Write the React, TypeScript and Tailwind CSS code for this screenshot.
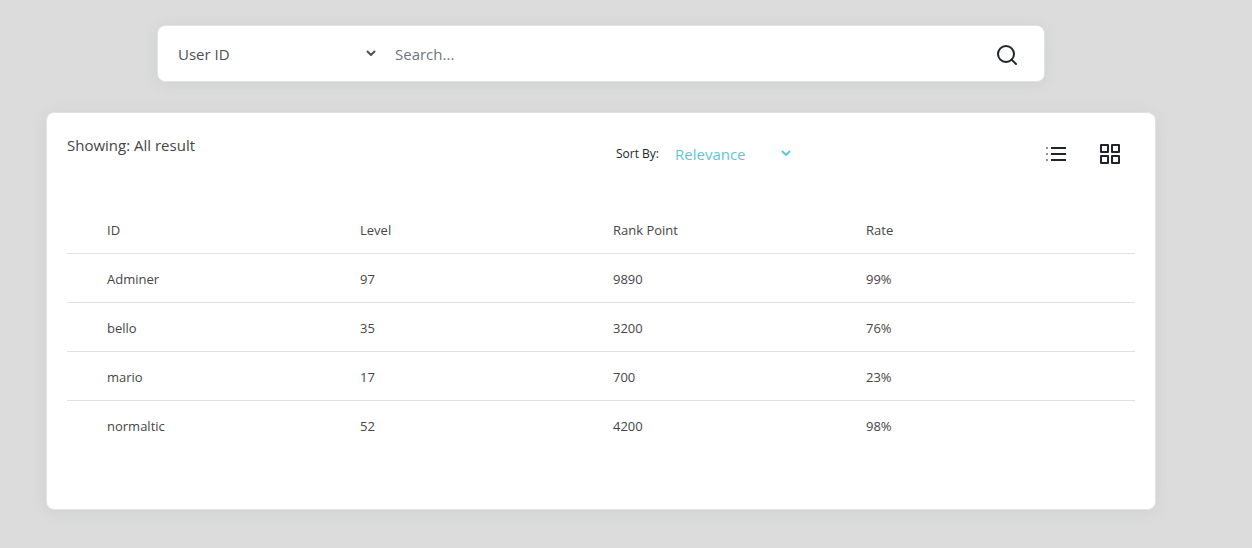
import { useState } from 'react';

interface Player {
  id: string;
  level: number;
  rankPoint: number;
  rate: string;
}

const players: Player[] = [
  { id: 'Adminer', level: 97, rankPoint: 9890, rate: '99%' },
  { id: 'bello', level: 35, rankPoint: 3200, rate: '76%' },
  { id: 'mario', level: 17, rankPoint: 700, rate: '23%' },
  { id: 'normaltic', level: 52, rankPoint: 4200, rate: '98%' },
];

function Chevron({ className }: { className: string }) {
  return (
    <svg className={className} viewBox="0 0 10 6" fill="none" stroke="currentColor" strokeWidth="2" aria-hidden="true">
      <path d="M1 1l4 4 4-4" />
    </svg>
  );
}

function SearchIcon() {
  return (
    <svg className="h-6 w-6" viewBox="0 0 24 24" fill="none" stroke="currentColor" strokeWidth="2" strokeLinecap="round" strokeLinejoin="round" aria-hidden="true">
      <circle cx="11" cy="11" r="8" />
      <line x1="21" y1="21" x2="16.65" y2="16.65" />
    </svg>
  );
}

function ListIcon() {
  return (
    <svg className="h-6 w-6" viewBox="0 0 24 24" fill="none" stroke="currentColor" strokeWidth="2" aria-hidden="true">
      <path d="M7 6h15M7 12h15M7 18h15" />
      <path d="M2 6h2M2 12h2M2 18h2" strokeOpacity="0.5" />
    </svg>
  );
}

function GridIcon() {
  return (
    <svg className="h-6 w-6" viewBox="0 0 24 24" fill="none" stroke="currentColor" strokeWidth="2" strokeLinejoin="round" aria-hidden="true">
      <rect x="3" y="3" width="7" height="7" />
      <rect x="14" y="3" width="7" height="7" />
      <rect x="14" y="14" width="7" height="7" />
      <rect x="3" y="14" width="7" height="7" />
    </svg>
  );
}

export default function App() {
  const [field, setField] = useState('User ID');
  const [query, setQuery] = useState('');
  const [sort, setSort] = useState('Relevance');

  return (
    <div className="min-h-screen bg-[#dcdcdc] pt-[25px] pr-24 pb-[38px] pl-[46px] font-['Open_Sans','Noto_Sans',sans-serif] text-[15px] text-[#454545]">
      <form
        onSubmit={(e) => e.preventDefault()}
        className="mx-auto flex h-[57px] w-4/5 items-center rounded-lg border border-[#e1e1e6] bg-white pr-[25px] pl-5 shadow-[0_2px_15px_rgba(82,85,92,0.08)]"
      >
        <div className="relative w-[198px]">
          <select
            aria-label="Search field"
            value={field}
            onChange={(e) => setField(e.target.value)}
            className="h-10 w-full appearance-none bg-transparent pt-[2px] pr-6 text-[#495057] outline-none"
          >
            <option>User ID</option>
            <option>Level</option>
            <option>Rank Point</option>
          </select>
          <Chevron className="pointer-events-none absolute top-4 right-0 h-[6px] w-[10px] text-[#495057]" />
        </div>
        <input
          type="text"
          aria-label="Search"
          placeholder="Search..."
          value={query}
          onChange={(e) => setQuery(e.target.value)}
          className="ml-[19px] h-10 min-w-0 flex-1 bg-transparent text-[#495057] outline-none placeholder:text-[#6c757d]"
        />
        <button type="submit" aria-label="Submit search" className="pt-[2px] text-[#212529]">
          <SearchIcon />
        </button>
      </form>

      <section className="mt-[30px] rounded-lg border border-[#e1e1e6] bg-white px-5 pt-[21px] pb-[60px] shadow-[0_2px_15px_rgba(82,85,92,0.08)]">
        <div className="flex">
          <p className="w-1/2">Showing: All result</p>
          <div className="flex w-1/2 items-center justify-between pr-[13px] pl-[15px]">
            <div className="flex items-center gap-4">
              <label htmlFor="sort" className="text-xs text-[#212529]">Sort By:</label>
              <div className="relative w-[116px]">
                <select
                  id="sort"
                  value={sort}
                  onChange={(e) => setSort(e.target.value)}
                  className="h-10 w-full appearance-none bg-transparent pr-6 text-[#5bc9d3] outline-none"
                >
                  <option>Relevance</option>
                  <option>Level</option>
                  <option>Rate</option>
                </select>
                <Chevron className="pointer-events-none absolute top-4 right-0 h-[6px] w-[10px] text-[#5bc9d3]" />
              </div>
            </div>
            <div className="flex gap-[30px] text-[#212529]">
              <button type="button" aria-label="List view">
                <ListIcon />
              </button>
              <button type="button" aria-label="Grid view">
                <GridIcon />
              </button>
            </div>
          </div>
        </div>

        <table className="mt-[30px] w-full table-fixed text-left text-[13px]">
          <thead>
            <tr className="h-[49px] border-b border-[#dee2e6]">
              <td className="w-7" />
              <th scope="col" className="px-3 pt-1 font-normal">ID</th>
              <th scope="col" className="px-3 pt-1 font-normal">Level</th>
              <th scope="col" className="px-3 pt-1 font-normal">Rank Point</th>
              <th scope="col" className="px-3 pt-1 font-normal">Rate</th>
              <td className="w-7" />
            </tr>
          </thead>
          <tbody>
            {players.map((player) => (
              <tr key={player.id} className="h-[49px] border-b border-[#dee2e6] last:border-b-0">
                <td />
                <td className="px-3 pt-1">{player.id}</td>
                <td className="px-3 pt-1">{player.level}</td>
                <td className="px-3 pt-1">{player.rankPoint}</td>
                <td className="px-3 pt-1">{player.rate}</td>
                <td />
              </tr>
            ))}
          </tbody>
        </table>
      </section>
    </div>
  );
}
